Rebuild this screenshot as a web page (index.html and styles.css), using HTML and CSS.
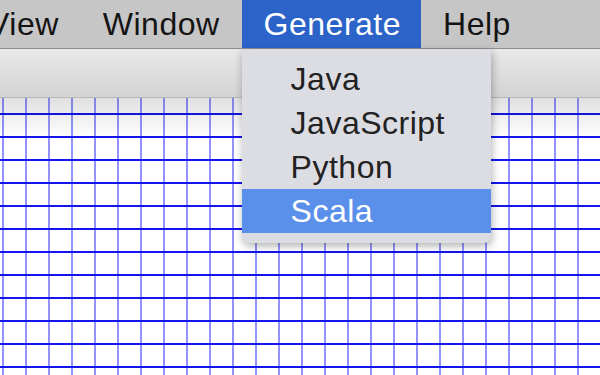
FILE: index.html
```html
<!DOCTYPE html>
<html>
<head>
<meta charset="UTF-8">
<title>Generate menu</title>
<link rel="stylesheet" href="styles.css">
</head>
<body>
	<div id="menubar">
		<span class="menu first">View</span>
		<span class="menu">Window</span>
		<span class="menu active">Generate
			<!-- 드롭다운 메뉴 -->
			<ul class="dropdown">
				<li>Java</li>
				<li>JavaScript</li>
				<li>Python</li>
				<li class="selected">Scala</li>
			</ul>
		</span>
		<span class="menu">Help</span>
	</div>
	<div id="toolbar"></div>
	<div id="canvas"></div>
</body>
</html>
```

FILE: styles.css
```css
html, body {
	height: 100%;
}

body {
	margin: 0;
	padding: 0;
	font-family: "Liberation Sans", Arial, sans-serif;
	display: flex;
	flex-direction: column;
	overflow: hidden;
}

#menubar {
	display: flex;
	height: 48px;
	background-color: #c6c6c6;
	border-bottom: 1px solid #8e8e8e;
	font-size: 32px;
	line-height: 48px;
	letter-spacing: 0.5px;
	color: #141414;
	white-space: nowrap;
}

.menu {
	position: relative;
	padding: 0 22px;
}

.menu.first {
	margin-left: -34px;
}

.menu.active {
	padding-right: 20px;
	background-color: #2b63c9;
	color: #fff;
}

.dropdown {
	position: absolute;
	top: 49px;
	left: 0;
	width: 249px;
	margin: 0;
	padding: 8px 0 10px 0;
	list-style-type: none;
	background-color: #dcdce3;
	color: #222;
	border-radius: 0 0 7px 7px;
	box-shadow: 1px 3px 8px rgba(0, 0, 0, 0.3);
	z-index: 10;
}

.dropdown li {
	height: 44px;
	line-height: 44px;
	padding-left: 49px;
}

.dropdown li.selected {
	background-color: #5a8fea;
	color: #fff;
}

#toolbar {
	height: 48px;
	background: linear-gradient(to bottom, #e9e9e9, #d3d3d3);
	border-bottom: 1px solid #b8b8b8;
}

#canvas {
	flex: 1;
	background-color: #fff;
	background-image:
		linear-gradient(to bottom, rgba(0, 0, 0, 0.12), rgba(0, 0, 0, 0) 40px),
		linear-gradient(to bottom, transparent 15px, #1414ee 15px, #1414ee 17px, transparent 17px),
		linear-gradient(to right, transparent 2px, rgba(40, 40, 255, 0.5) 2px, rgba(40, 40, 255, 0.5) 4px, transparent 4px);
	background-size: 100% 100%, 100% 23px, 23px 100%;
	background-repeat: no-repeat, repeat, repeat;
}
```
